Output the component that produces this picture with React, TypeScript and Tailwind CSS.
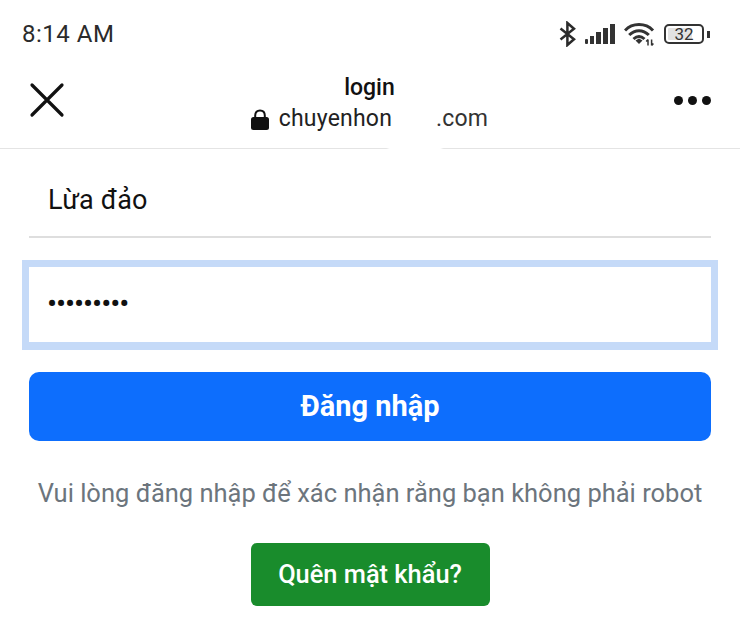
import React from "react";

function Bluetooth() {
  return (
    <svg width="17" height="26" viewBox="0 0 17 26" fill="none" stroke="#2b2b2b" strokeWidth="2.5" strokeLinejoin="miter">
      <path d="M1.5 7.5 L15 18.2 L8.4 24 V2 L15 7.8 L1.5 18.5" />
    </svg>
  );
}

function Signal() {
  return (
    <div className="flex items-end gap-[2px] h-[20px]">
      <div className="w-[3px] h-[5px] bg-[#333] rounded-[1px]" />
      <div className="w-[4px] h-[8px] bg-[#333]" />
      <div className="w-[5px] h-[12px] bg-[#333]" />
      <div className="w-[5px] h-[16px] bg-[#333]" />
      <div className="w-[5px] h-[20px] bg-[#333]" />
    </div>
  );
}

function Wifi() {
  return (
    <svg width="31" height="24" viewBox="0 0 31 24" fill="none" stroke="#333" strokeWidth="3">
      <path d="M1 8.5 C8.5 0.6 21.5 0.6 29 8.5" />
      <path d="M5.2 13 C11 7.2 19 7.2 24.8 13" />
      <path d="M9.5 17 C13 13.8 17 13.8 20.5 17" />
      <path d="M11.5 18.6 L15 16.4 L18.5 18.6 L15 22 Z" fill="#333" stroke="none" />
      <path d="M24 23.5 V17.5 M22.2 19.5 L24 17.5" strokeWidth="1.5" />
      <path d="M27.6 17.5 V23.5 M27.6 23.5 L29.4 21.5" strokeWidth="1.5" />
    </svg>
  );
}

function Battery() {
  return (
    <div className="flex items-center gap-[3px]">
      <div className="relative w-[40px] h-[20px] rounded-[5px] border-2 border-[#333] p-[2px] overflow-hidden">
        <div className="w-[24px] h-full bg-[#e2e2e2] rounded-[1px]" />
        <div className="absolute inset-0 flex items-center justify-center text-[17px] leading-none text-[#333]">32</div>
      </div>
      <div className="w-[3px] h-[7px] bg-[#333]" />
    </div>
  );
}

function Lock() {
  return (
    <svg width="18" height="21" viewBox="0 0 18 21" fill="none">
      <path d="M4.2 9 V6.5 C4.2 3.2 6 1.4 9 1.4 C12 1.4 13.8 3.2 13.8 6.5 V9" stroke="#111" strokeWidth="2" />
      <rect x="0" y="8" width="18" height="13" rx="2.5" fill="#111" />
    </svg>
  );
}

function Close() {
  return (
    <svg width="36" height="36" viewBox="0 0 36 36" fill="none" stroke="#111" strokeWidth="3.2" strokeLinecap="round">
      <path d="M3 3 L33 33 M33 3 L3 33" />
    </svg>
  );
}

export default function App() {
  return (
    <div className="relative w-[740px] h-[628px] overflow-hidden bg-white font-['Roboto',sans-serif] text-[#111]">
      <div className="flex h-[68px] items-center justify-between pl-[22px] pr-[30px]">
        <span className="text-[24px] leading-none tracking-[0.5px] text-[#2b2b2b]">8:14 AM</span>
        <div className="flex items-center gap-[9px]">
          <Bluetooth />
          <Signal />
          <Wifi />
          <Battery />
        </div>
      </div>

      <div className="relative flex h-[81px] items-center justify-between border-b border-[#e4e4e4] pl-[29px] pr-[29px] pb-[16px]">
        <Close />
        <div className="flex flex-col items-center mt-[7px]">
          <div className="text-[23px] leading-[30px] font-medium">login</div>
          <div className="mt-[1px] flex items-center gap-[10px] text-[23px] leading-[30px] tracking-[0.2px] text-[#222]">
            <Lock />
            <span className="flex">
              <span>chuyenhon</span>
              <span className="w-[44px]" />
              <span className="text-[#333]">.com</span>
            </span>
          </div>
        </div>
        <div className="flex gap-[5px]">
          <div className="h-[9px] w-[9px] rounded-full bg-[#111]" />
          <div className="h-[9px] w-[9px] rounded-full bg-[#111]" />
          <div className="h-[9px] w-[9px] rounded-full bg-[#111]" />
        </div>
        <div className="absolute left-[388px] top-[62px] h-[24px] w-[54px] bg-white blur-[1px]" />
      </div>

      <div className="flex flex-col px-[29px]">
        <div className="flex h-[89px] items-center border-b-2 border-[#dedede] pl-[19px] pt-[15px] text-[27px] leading-none tracking-[0.2px]">
          Lừa đảo
        </div>
        <div className="-mx-[7px] mt-[22px] flex h-[90px] items-center border-x-[7px] border-t-[7px] border-b-[8px] border-[#c5daf8] pl-[18px] pb-[2px] text-[30px] leading-none tracking-[-1.1px]">
          •••••••••
        </div>
        <button className="mt-[22px] h-[69px] rounded-[10px] bg-[#0d6efd] text-[29px] font-bold text-white">
          Đăng nhập
        </button>
        <p className="mt-[37px] text-center text-[25.5px] leading-[30px] whitespace-nowrap text-[#6c757d]">
          Vui lòng đăng nhập để xác nhận rằng bạn không phải robot
        </p>
        <div className="mt-[35px] flex justify-center">
          <button className="h-[63px] w-[239px] rounded-[6px] bg-[#198c2c] text-[25.4px] font-medium text-white">
            Quên mật khẩu?
          </button>
        </div>
      </div>
    </div>
  );
}
